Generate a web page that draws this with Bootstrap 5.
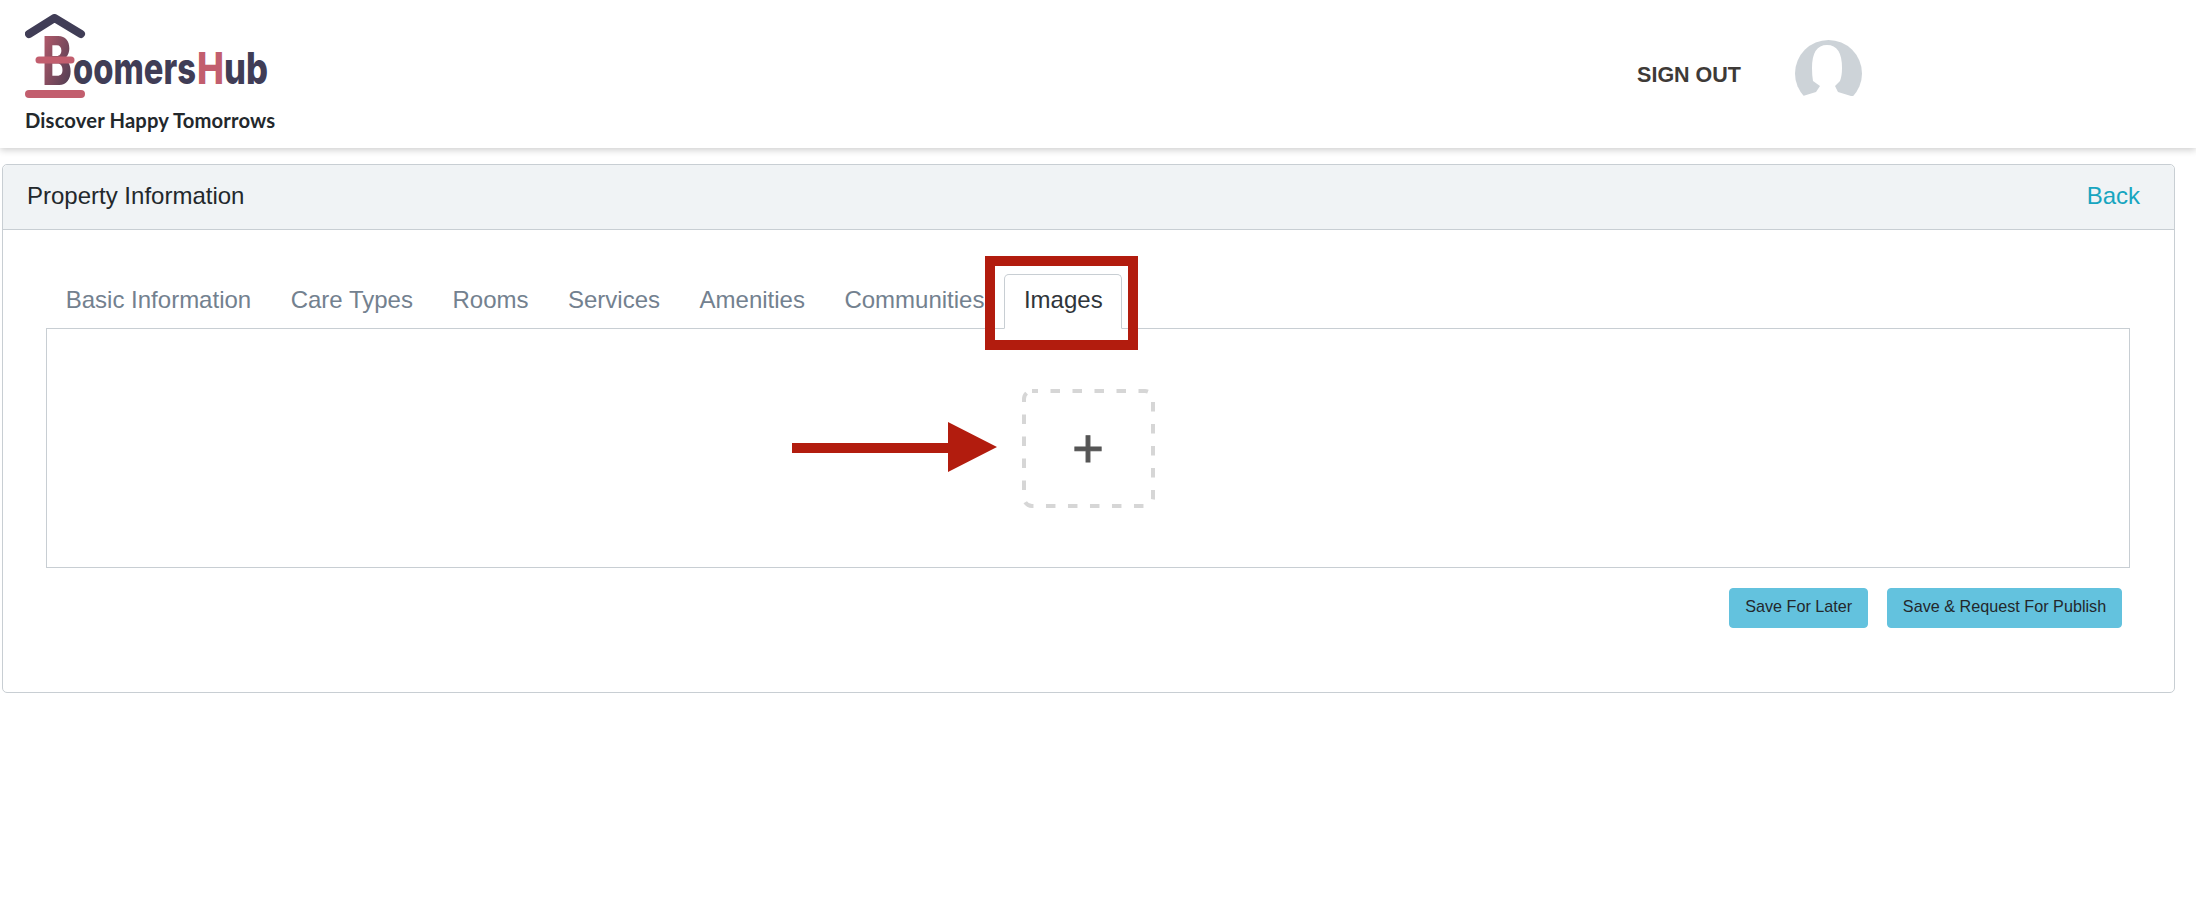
<!doctype html>
<html lang="en">
<head>
<meta charset="utf-8">
<title>Property Information</title>
<link rel="stylesheet" href="https://cdn.jsdelivr.net/npm/bootstrap@5.3.0/dist/css/bootstrap.min.css">
<style>
body{font-family:"Liberation Sans",Arial,sans-serif;color:#23282c;background:#fff;min-height:918px}
.topbar{height:148px;padding:0 0 0 25px;box-shadow:0 2px 7px rgba(0,0,0,.2);background:#fff;align-items:flex-start}
.brand-box{padding-top:14px;width:280px}
.brand-tag{font-family:Lato,sans-serif;font-weight:700;font-size:20.2px;line-height:24px;color:#23282c;margin-top:-4px;white-space:nowrap;letter-spacing:.15px}
.signout{font-size:21.5px;font-weight:700;color:#3e3a37;text-decoration:none;margin-right:54px;margin-top:3px}
.user-pic{display:block;margin-top:-1px}
.right-zone{margin-right:334px;height:148px}
.prop-card{margin:16px 21px 0 2px;border-color:#c8ced3;border-radius:5px;height:529px}
.prop-head{height:65px;padding:0 34px 3px 24px;background:#f0f3f5;border-color:#c8ced3;font-size:24px}
.back-link{color:#17a5c0;text-decoration:none}
.prop-body{padding:44px 44px 0 43px}
.tabbar{border-color:#c8ced3;height:55px;flex-wrap:nowrap}
.tabbar .nav-link{color:#73818f;font-size:24px;line-height:28px;padding:11px 18.75px 15px;border-width:1px;height:55px}
.tabbar .nav-link.active{color:#2f353a;border-color:#c8ced3 #c8ced3 #fff;border-top-left-radius:5px;border-top-right-radius:5px}
.pane-box{border:1px solid #c8ced3;border-top:0;padding:60px 0;height:239px}
.upload-box{width:133px;height:119px;color:#555;font-size:54px;line-height:1;-webkit-text-stroke:1px #555;padding-bottom:2px}
.upload-edge{position:absolute;inset:0}
.act-row{padding:20px 8px 0 0;gap:19px}
.act-btn{background:#63c2de;border-color:#63c2de;color:#23282c;font-size:16.2px;height:40px;padding:0 14.8px 3px;border-radius:4px;line-height:35px}
.mark-rect{position:absolute;left:985px;top:256px;width:153px;height:94px;border:10px solid #b21c0e;pointer-events:none}
.mark-arrow{position:absolute;left:792px;top:422px}
</style>
</head>
<body>
<div class="position-relative">
  <nav class="navbar topbar d-flex justify-content-between">
    <div class="brand-box">
      <svg width="260" height="98" viewBox="0 0 260 98" role="img" aria-label="BoomersHub logo" class="d-block">
        <defs><linearGradient id="bg" x1="0" y1="0" x2="1" y2="1"><stop offset="0" stop-color="#c25e6e"/><stop offset="1" stop-color="#40394f"/></linearGradient></defs>
        <path d="M4 20 29.5 4 56 20" fill="none" stroke="#403d56" stroke-width="8" stroke-linecap="round" stroke-linejoin="round"/>
        <text x="17" y="71" font-family="Inter,sans-serif" font-weight="800" font-size="67" fill="url(#bg)" textLength="30" lengthAdjust="spacingAndGlyphs">B</text>
        <path d="M14 46H46" stroke="#c25e6e" stroke-width="7" stroke-linecap="round"/>
        <path d="M4 80H56" stroke="#c25e6e" stroke-width="8" stroke-linecap="round"/>
        <text x="48" y="70" font-family="Inter,sans-serif" font-weight="800" font-size="44" fill="#403d56" textLength="123" lengthAdjust="spacingAndGlyphs">oomers</text>
        <text x="172" y="70" font-family="Inter,sans-serif" font-weight="800" font-size="44" fill="#c25e6e" textLength="27" lengthAdjust="spacingAndGlyphs">H</text>
        <text x="199" y="70" font-family="Inter,sans-serif" font-weight="800" font-size="44" fill="#403d56" textLength="44" lengthAdjust="spacingAndGlyphs">ub</text>
      </svg>
      <div class="brand-tag">Discover Happy Tomorrows</div>
    </div>
    <div class="right-zone d-flex align-items-center">
      <a class="signout" href="#">SIGN OUT</a>
      <svg class="user-pic" width="67" height="67" viewBox="0 0 67 67" role="img" aria-label="User">
        <circle cx="33.5" cy="33.5" r="33.5" fill="#cdd3d8"/>
        <path fill="#fff" d="M0 56 8 56 21 52 25 46 18 41Q17 36 17 28 17 5 32 5 47 5 47 28 47 36 45 41L40 46 43 52 56 56 67 56V67H0Z"/>
      </svg>
    </div>
  </nav>

  <div class="card prop-card">
    <div class="card-header prop-head d-flex justify-content-between align-items-center">
      <span>Property Information</span>
      <a class="back-link" href="#">Back</a>
    </div>
    <div class="card-body prop-body">
      <ul class="nav nav-tabs tabbar">
        <li class="nav-item"><a class="nav-link" href="#">Basic Information</a></li>
        <li class="nav-item"><a class="nav-link" href="#">Care Types</a></li>
        <li class="nav-item"><a class="nav-link" href="#">Rooms</a></li>
        <li class="nav-item"><a class="nav-link" href="#">Services</a></li>
        <li class="nav-item"><a class="nav-link" href="#">Amenities</a></li>
        <li class="nav-item"><a class="nav-link" href="#">Communities</a></li>
        <li class="nav-item"><a class="nav-link active" href="#">Images</a></li>
      </ul>
      <div class="pane-box d-flex justify-content-center">
        <div class="upload-box position-relative d-flex align-items-center justify-content-center">
          <svg class="upload-edge" width="133" height="119" viewBox="0 0 133 119" aria-hidden="true"><rect x="2" y="2" width="129" height="115" rx="8" fill="none" stroke="#d6d6d6" stroke-width="4" stroke-dasharray="9.5 12.5" stroke-dashoffset="3.5"/></svg>
          <span>+</span>
        </div>
      </div>
      <div class="act-row d-flex justify-content-end">
        <button type="button" class="btn act-btn">Save For Later</button>
        <button type="button" class="btn act-btn">Save &amp; Request For Publish</button>
      </div>
    </div>
  </div>

  <div class="mark-rect"></div>
  <svg class="mark-arrow" width="206" height="50" viewBox="0 0 206 50" aria-hidden="true">
    <path fill="#b21c0e" d="M0 21H156V0L205 25 156 50V31H0Z"/>
  </svg>
</div>
<script src="https://cdn.jsdelivr.net/npm/bootstrap@5.3.0/dist/js/bootstrap.bundle.min.js"></script>
</body>
</html>
